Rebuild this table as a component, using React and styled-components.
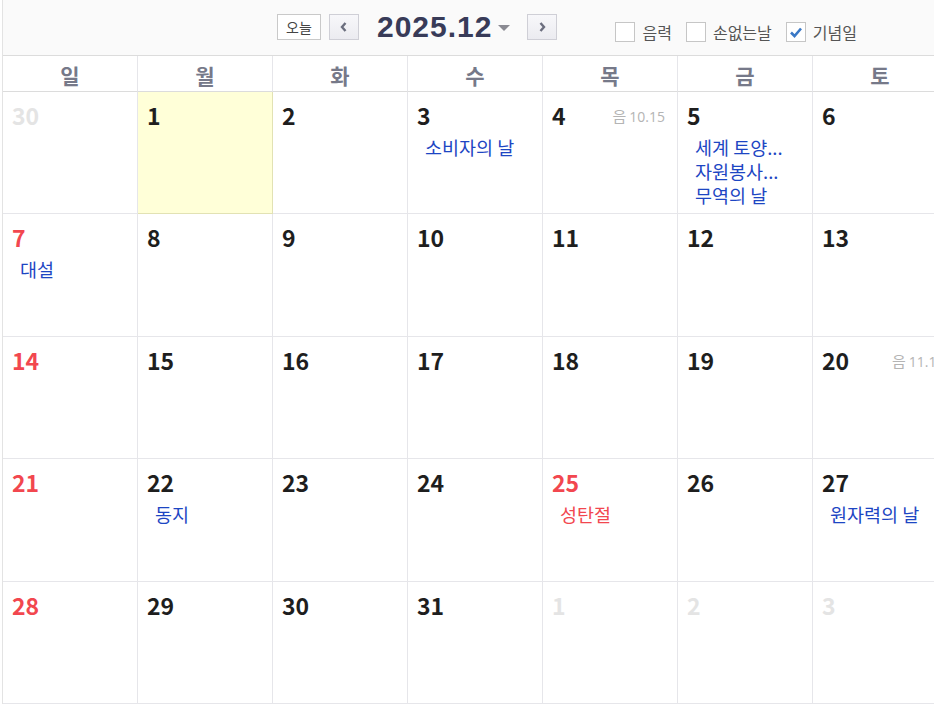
import React from "react";
import styled, { createGlobalStyle } from "styled-components";

const Global = createGlobalStyle`
  html, body { margin: 0; padding: 0; background: #fff; overflow: hidden; }
  body { font-family: "Noto Sans CJK KR", "Noto Sans", sans-serif; }
`;

const Page = styled.div`
  width: 945px;
  margin-left: 2px;
  border-left: 1px solid #e3e3e3;
`;

const Toolbar = styled.div`
  height: 56px;
  background: #fafafa;
  border-bottom: 1px solid #dcdcdc;
  display: flex;
  align-items: flex-start;
  padding-left: 274px;
  box-sizing: border-box;
`;

const Nav = styled.div`
  display: flex;
  align-items: center;
  height: 26px;
  margin-top: 14px;
`;

const TodayBtn = styled.button`
  width: 44px;
  height: 26px;
  box-sizing: border-box;
  border: 1px solid #c9c9c9;
  background: #fff;
  font-family: "Noto Sans CJK KR", sans-serif;
  font-size: 14px;
  color: #444;
  padding: 0;
  margin-right: 8px;
  display: flex;
  align-items: center;
  justify-content: center;
`;

const ArrowBtn = styled.button`
  width: 30px;
  height: 26px;
  box-sizing: border-box;
  border: 1px solid #cfcfd6;
  background: linear-gradient(#f7f7fa, #ebebf0);
  padding: 0;
  display: flex;
  align-items: center;
  justify-content: center;
  margin: ${(p) => p.$margin || "0"};
`;

const Title = styled.div`
  font-family: "Liberation Sans", Arial, sans-serif;
  font-weight: bold;
  font-size: 30px;
  color: #383b58;
  letter-spacing: 1px;
  line-height: 26px;
  display: flex;
  align-items: center;
`;

const Caret = styled.span`
  width: 0;
  height: 0;
  border-left: 6px solid transparent;
  border-right: 6px solid transparent;
  border-top: 6px solid #8a8a92;
  margin-left: 6px;
  margin-top: 1px;
`;

const Options = styled.div`
  display: flex;
  align-items: center;
  margin-left: 58px;
  margin-top: 22px;
  height: 20px;
`;

const Opt = styled.label`
  display: flex;
  align-items: center;
  font-size: 16px;
  color: #555;
  margin-right: 14px;
`;

const Box = styled.span`
  width: 20px;
  height: 20px;
  box-sizing: border-box;
  border: 1px solid #c6c6c6;
  background: #fff;
  margin-right: 7px;
  display: flex;
  align-items: center;
  justify-content: center;
`;

const Grid = styled.div`
  display: grid;
  grid-template-columns: repeat(7, 1fr);
`;

const DayName = styled.div`
  height: 35px;
  border-right: 1px solid #e6e6ea;
  border-bottom: 1px solid #dcdcdc;
  display: flex;
  align-items: center;
  justify-content: center;
  padding-top: 3px;
  box-sizing: border-box;
  height: 36px;
  font-size: 21px;
  font-weight: bold;
  color: #767989;
`;

const Weeks = styled.div`
  display: grid;
  grid-template-columns: repeat(7, 1fr);
  grid-template-rows: repeat(5, 1fr);
  height: 612px;
`;

const Cell = styled.div`
  position: relative;
  box-sizing: border-box;
  border-right: 1px solid ${(p) => (p.$today ? "#e2e2b4" : "#e6e6ea")};
  border-bottom: 1px solid ${(p) => (p.$today ? "#e2e2b4" : "#e6e6ea")};
  background: ${(p) => (p.$today ? "#ffffd8" : "#fff")};
  padding: 9px 0 0 9px;
  min-width: 0;
  overflow: hidden;
`;

const Num = styled.div`
  font-size: 23px;
  font-weight: bold;
  line-height: 28px;
  color: ${(p) => (p.$other ? "#e4e4e4" : p.$red ? "#f2474f" : "#1e1e1e")};
`;

const Lunar = styled.div`
  position: absolute;
  top: 13px;
  right: 12px;
  font-size: 15px;
  color: #b4b4b4;
  white-space: nowrap;
  display: flex;
  align-items: baseline;
  gap: 3px;
`;

const LunarNum = styled.span`
  font-family: "Open Sans", "Noto Sans", sans-serif;
  font-size: 14px;
`;

const Events = styled.div`
  margin-top: 6px;
  padding-left: 8px;
`;

const Event = styled.div`
  font-size: 18.5px;
  line-height: 24px;
  color: ${(p) => (p.$red ? "#f2474f" : "#1d46c3")};
  white-space: nowrap;
`;

const days = ["일", "월", "화", "수", "목", "금", "토"];

const cells = [
  { n: 30, other: true },
  { n: 1, today: true },
  { n: 2 },
  { n: 3, ev: ["소비자의 날"] },
  { n: 4, lunar: "10.15" },
  { n: 5, ev: ["세계 토양...", "자원봉사...", "무역의 날"] },
  { n: 6 },
  { n: 7, red: true, ev: ["대설"] },
  { n: 8 },
  { n: 9 },
  { n: 10 },
  { n: 11 },
  { n: 12 },
  { n: 13 },
  { n: 14, red: true },
  { n: 15 },
  { n: 16 },
  { n: 17 },
  { n: 18 },
  { n: 19 },
  { n: 20, lunar: "11.1", clip: true },
  { n: 21, red: true },
  { n: 22, ev: ["동지"] },
  { n: 23 },
  { n: 24 },
  { n: 25, red: true, ev: ["성탄절"], evRed: true },
  { n: 26 },
  { n: 27, ev: ["원자력의 날"] },
  { n: 28, red: true },
  { n: 29 },
  { n: 30 },
  { n: 31 },
  { n: 1, other: true },
  { n: 2, other: true },
  { n: 3, other: true },
];

const Chevron = ({ dir }) => (
  <svg width="10" height="12" viewBox="0 0 10 12">
    <path
      d={dir === "left" ? "M6.5 2 L3 6 L6.5 10" : "M3.5 2 L7 6 L3.5 10"}
      fill="none"
      stroke="#6b6e7e"
      strokeWidth="2.4"
    />
  </svg>
);

export default function App() {
  return (
    <Page>
      <Global />
      <Toolbar>
        <Nav>
          <TodayBtn>오늘</TodayBtn>
          <ArrowBtn $margin="0 18px 0 0">
            <Chevron dir="left" />
          </ArrowBtn>
          <Title>
            2025.12
            <Caret />
          </Title>
          <ArrowBtn $margin="0 0 0 17px">
            <Chevron dir="right" />
          </ArrowBtn>
        </Nav>
        <Options>
          <Opt>
            <Box />
            음력
          </Opt>
          <Opt>
            <Box />
            손없는날
          </Opt>
          <Opt>
            <Box>
              <svg width="14" height="12" viewBox="0 0 14 12">
                <path d="M2 6.5 L5.5 10 L12 2.5" fill="none" stroke="#3a78c6" strokeWidth="2.6" />
              </svg>
            </Box>
            기념일
          </Opt>
        </Options>
      </Toolbar>
      <Grid>
        {days.map((d) => (
          <DayName key={d}>{d}</DayName>
        ))}
      </Grid>
      <Weeks>
        {cells.map((c, i) => (
          <Cell key={i} $today={c.today}>
            <Num $other={c.other} $red={c.red}>
              {c.n}
            </Num>
            {c.lunar && (
              <Lunar style={c.clip ? { right: "auto", left: "79px" } : undefined}>
                음<LunarNum>{c.lunar}</LunarNum>
              </Lunar>
            )}
            {c.ev && (
              <Events>
                {c.ev.map((e) => (
                  <Event key={e} $red={c.evRed}>
                    {e}
                  </Event>
                ))}
              </Events>
            )}
          </Cell>
        ))}
      </Weeks>
    </Page>
  );
}
